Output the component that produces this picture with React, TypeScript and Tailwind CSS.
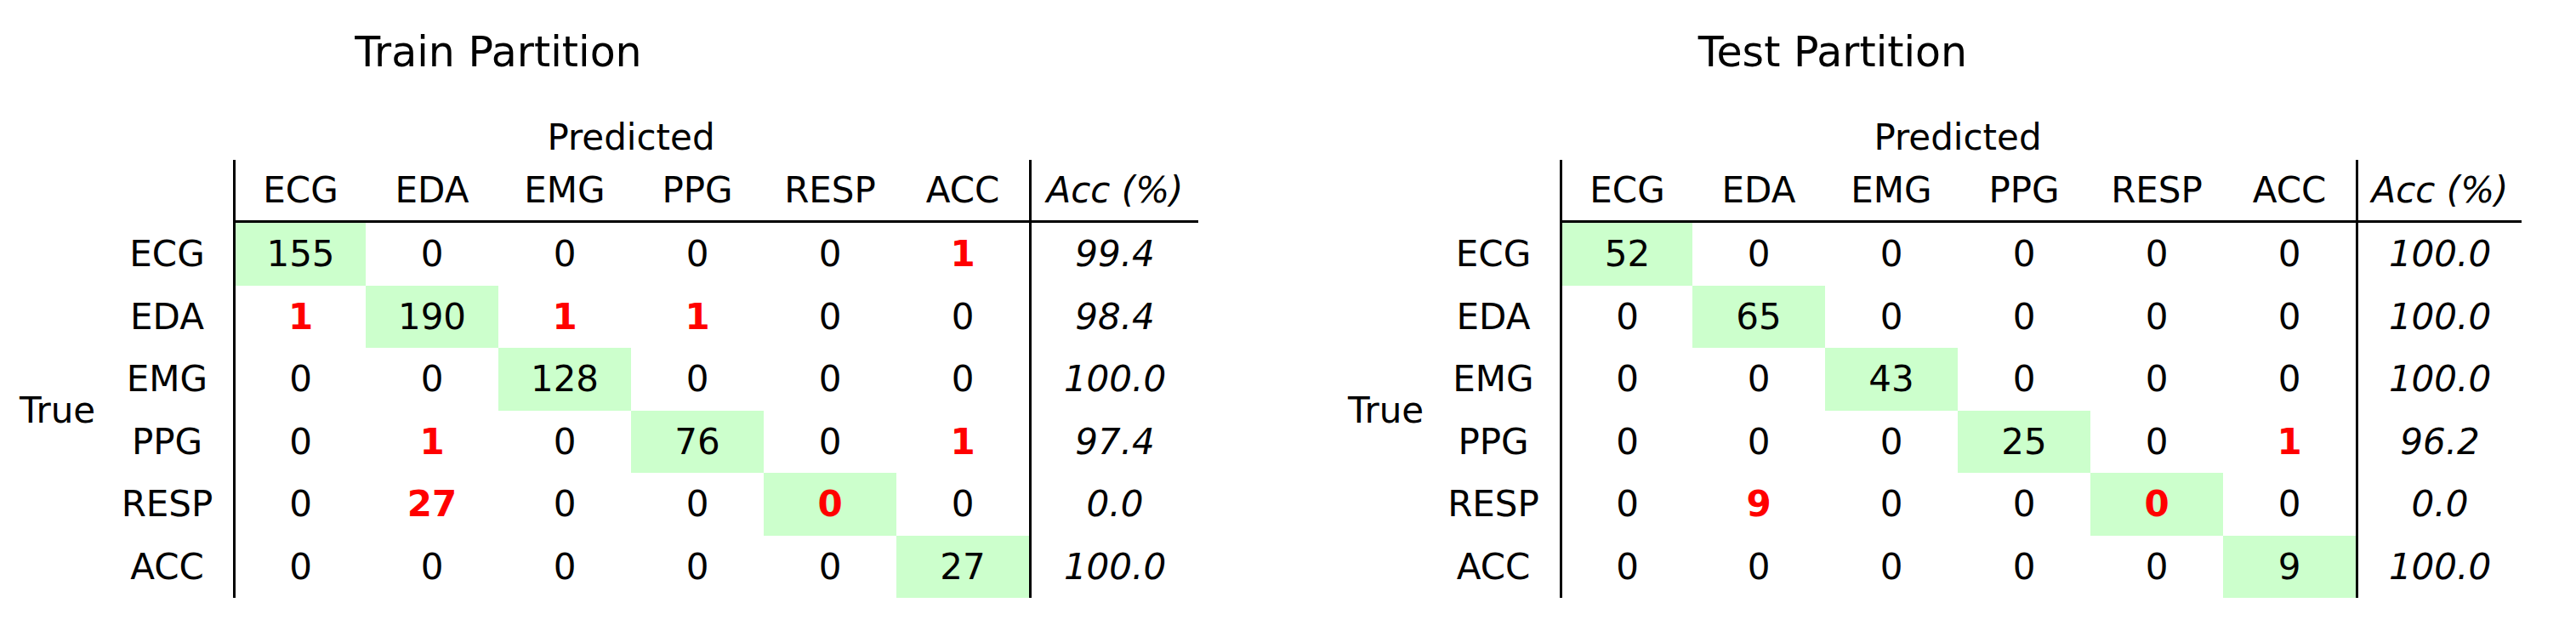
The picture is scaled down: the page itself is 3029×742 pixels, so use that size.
const classes = ['ECG', 'EDA', 'EMG', 'PPG', 'RESP', 'ACC']

type Panel = {
  title: string
  offset: string
  titleOffset: string
  trueWidth: string
  cols: string
  matrix: number[][]
  acc: string[]
}

const panels: Panel[] = [
  {
    title: 'Train Partition',
    offset: 'ml-[23px]',
    titleOffset: 'ml-[363px]',
    trueWidth: 'w-[96px]',
    cols: 'grid-cols-[155px_repeat(6,156px)_199px]',
    matrix: [
      [155, 0, 0, 0, 0, 1],
      [1, 190, 1, 1, 0, 0],
      [0, 0, 128, 0, 0, 0],
      [0, 1, 0, 76, 0, 1],
      [0, 27, 0, 0, 0, 0],
      [0, 0, 0, 0, 0, 27]
    ],
    acc: ['99.4', '98.4', '100.0', '97.4', '0.0', '100.0']
  },
  {
    title: 'Test Partition',
    offset: 'ml-[176px]',
    titleOffset: 'ml-[370px]',
    trueWidth: 'w-[93px]',
    cols: 'grid-cols-[156px_repeat(6,156px)_195px]',
    matrix: [
      [52, 0, 0, 0, 0, 0],
      [0, 65, 0, 0, 0, 0],
      [0, 0, 43, 0, 0, 0],
      [0, 0, 0, 25, 0, 1],
      [0, 9, 0, 0, 0, 0],
      [0, 0, 0, 0, 0, 9]
    ],
    acc: ['100.0', '100.0', '100.0', '96.2', '0.0', '100.0']
  }
]

function ConfusionPanel({ panel }: { panel: Panel }) {
  return (
    <div className={`flex flex-col ${panel.offset}`}>
      {/* title */}
      <div className="h-[134px] pt-[32px]">
        <div className={`w-[400px] text-center text-[49px] leading-[60px] ${panel.titleOffset}`}>{panel.title}</div>
      </div>

      <div className="flex">
        {/* y axis label */}
        <div className={`${panel.trueWidth} mt-[128px] h-[441px] flex items-center text-[42px]`}>True</div>

        <div className={`grid ${panel.cols} grid-rows-[54px_74px_repeat(6,73.5px)] text-[42px]`}>
          {/* predicted row */}
          <div />
          <div className="col-span-6 flex items-center justify-center">Predicted</div>
          <div />

          {/* header row */}
          <div />
          {classes.map((c, j) => (
            <div
              key={c}
              className={`flex items-center justify-center border-b-[3px] border-black ${j === 0 ? 'border-l-[3px]' : ''}`}
            >
              {c}
            </div>
          ))}
          <div className="flex items-center justify-center border-b-[3px] border-l-[3px] border-black italic">
            Acc (%)
          </div>

          {/* body */}
          {panel.matrix.map((row, i) => (
            <div key={classes[i]} className="contents">
              <div className="flex items-center justify-center">{classes[i]}</div>
              {row.map((v, j) => {
                const diag = i === j
                const miss = (!diag && v > 0) || (diag && v === 0)
                return (
                  <div
                    key={j}
                    className={`flex items-center justify-center ${diag ? 'bg-[#ccffcc]' : ''} ${
                      j === 0 ? 'border-l-[3px] border-black' : ''
                    } ${miss ? 'font-bold text-[#ff0000]' : ''}`}
                  >
                    {v}
                  </div>
                )
              })}
              <div className="flex items-center justify-center border-l-[3px] border-black italic">{panel.acc[i]}</div>
            </div>
          ))}
        </div>
      </div>
    </div>
  )
}

export default function App() {
  return (
    <div className="w-[3029px] h-[742px] bg-white text-black font-['DejaVu_Sans',sans-serif] flex overflow-hidden">
      {panels.map((p) => (
        <ConfusionPanel key={p.title} panel={p} />
      ))}
    </div>
  )
}
